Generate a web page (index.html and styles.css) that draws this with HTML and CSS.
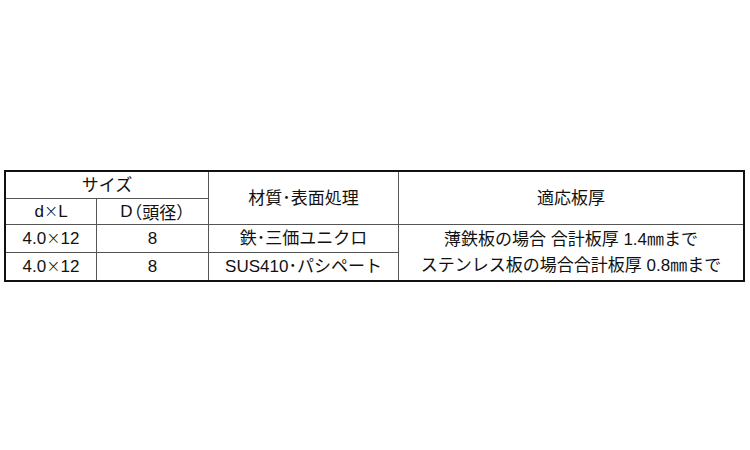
FILE: index.html
```
<!DOCTYPE html>
<html lang="ja">
<head>
<meta charset="utf-8">
<link rel="stylesheet" href="styles.css">
</head>
<body>
<div class="spec">
  <div class="cell c-size">サイズ</div>
  <div class="cell c-mat">材質･表面処理</div>
  <div class="cell c-thick">適応板厚</div>
  <div class="cell c-dl">d<span class="x">×</span>L</div>
  <div class="cell c-d">D<span class="paren">（頭径）</span></div>
  <div class="cell r3 col1">4.0<span class="x">×</span>12</div>
  <div class="cell r3 col2">8</div>
  <div class="cell r3 col3">鉄･三価ユニクロ</div>
  <div class="cell c-note">薄鉄板の場合 合計板厚 1.4㎜まで<br>ステンレス板の場合合計板厚 0.8㎜まで</div>
  <div class="cell r4 col1">4.0<span class="x">×</span>12</div>
  <div class="cell r4 col2">8</div>
  <div class="cell r4 col3">SUS410･パシペート</div>
</div>
</body>
</html>
```
FILE: styles.css
```
html, body {
  margin: 0;
  padding: 0;
  background: #fff;
}
body {
  padding: 170px 0 0 4px;
  font-family: "Liberation Sans", "Noto Sans CJK JP", sans-serif;
  font-size: 17px;
  color: #111;
}
.spec {
  width: 737px;
  height: 108px;
  border: 2px solid #111;
  display: grid;
  grid-template-columns: 90px 111px 189px 344px;
  grid-template-rows: 26px 25px 27px 27px;
  gap: 1px;
  background: #555;
}
.cell {
  background: #fff;
  display: flex;
  align-items: center;
  justify-content: center;
  text-align: center;
  line-height: 1;
  white-space: nowrap;
}
.x {
  font-family: "DejaVu Sans", sans-serif;
  font-weight: 300;
}
.paren {
  font-family: "Noto Sans CJK JP", sans-serif;
  font-feature-settings: "halt";
  margin-left: 1px;
}
.c-size { grid-column: 1 / 3; grid-row: 1; }
.c-mat { grid-column: 3; grid-row: 1 / 3; }
.c-thick { grid-column: 4; grid-row: 1 / 3; }
.c-dl { grid-column: 1; grid-row: 2; }
.c-d { grid-column: 2; grid-row: 2; }
.r3 { grid-row: 3; }
.r4 { grid-row: 4; }
.col1 { grid-column: 1; }
.col2 { grid-column: 2; }
.col3 { grid-column: 3; }
.c-note {
  grid-column: 4;
  grid-row: 3 / 5;
  line-height: 26px;
}
```
